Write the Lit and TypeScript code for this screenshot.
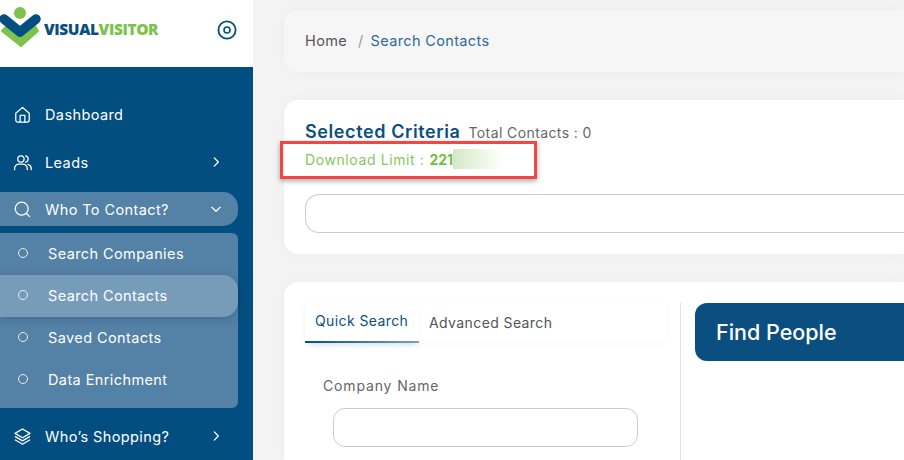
import { LitElement, html, css, svg } from "lit";
import { customElement } from "lit/decorators.js";

const stroke = (d: unknown, size = 20, w = 1.6) => html`<svg width=${size} height=${size} viewBox="0 0 24 24" fill="none" stroke="currentColor" stroke-width=${w} stroke-linecap="round" stroke-linejoin="round">${d}</svg>`;
const home = svg`<path d="M3.5 10.5 12 3l8.5 7.5V19a2.5 2.5 0 0 1-2.5 2.5H6A2.5 2.5 0 0 1 3.5 19z"/><path d="M9 21.5V13h6v8.5"/>`;
const users = svg`<circle cx="10" cy="7.5" r="4"/><path d="M2 21v-1.5A5.5 5.5 0 0 1 7.5 14h5a5.5 5.5 0 0 1 5.5 5.5V21"/><path d="M16 3.6a4 4 0 0 1 0 7.8"/><path d="M19 14.3a5.5 5.5 0 0 1 4 5.2V21"/>`;
const search = svg`<circle cx="11" cy="11" r="8.2"/><path d="m21 21-4-4"/>`;
const layers = svg`<path d="M12 2.5 2.5 8 12 13.5 21.5 8z"/><path d="m3 12.2 9 5.3 9-5.3"/><path d="m3 16.4 9 5.3 9-5.3"/>`;
const right = svg`<path d="m9 5 7 7-7 7"/>`;
const down = svg`<path d="m5 9 7 7 7-7"/>`;

@customElement("app-root")
export class AppRoot extends LitElement {
  static styles = css`
    :host { display: block; width: 904px; height: 460px; overflow: hidden; background: #f3f3f3; font-family: Inter, "Open Sans", sans-serif; position: relative; }
    .page { display: flex; height: 460px; }
    .side { width: 253px; flex: none; background: #034e80; color: #fff; font-size: 14.5px; letter-spacing: .4px; }
    .brand { height: 67px; background: #fff; display: flex; align-items: flex-start; box-sizing: border-box; padding-top: 6px; }
    .wordmark { font: 800 15.5px/1 "Open Sans", sans-serif; letter-spacing: -.42px; color: #0b4f80; margin: 16px 0 0 2px; }
    .wordmark span { color: #7cc24c; }
    .target { margin: 14px 16px 0 auto; color: #034e80; display: flex; }
    .menu { padding-top: 23px; }
    .item { height: 48px; display: flex; align-items: center; padding-left: 13px; width: 238px; box-sizing: border-box; }
    .item svg:first-child { flex: none; }
    .item .label { margin-left: 13px; flex: 1; }
    .item .chev { margin-right: 15px; display: flex; }
    .item.open { height: 34px; margin-top: 6px; background: #5481a6; border-radius: 0 15px 15px 0; }
    .sub { margin-top: 7px; width: 238px; height: 175px; background: #5481a6; border-radius: 0 6px 6px 0; display: flex; flex-direction: column; }
    .subitem { height: 42px; box-sizing: border-box; padding-bottom: 2px; display: flex; align-items: center; padding-left: 18px; gap: 20px; }
    .subitem.active { background: #779cb9; border-radius: 0 15px 15px 0; box-shadow: 0 2px 8px rgba(0,40,70,.25); }
    .dot { width: 8px; height: 8px; border: 1px solid #e6edf3; border-radius: 50%; flex: none; }
    .item.last { margin-top: 4px; }
    .main { flex: 1; min-width: 0; padding: 10px 0 0 31px; display: flex; flex-direction: column; gap: 28px; }
    .card { background: #fff; border-radius: 14px 0 0 14px; box-shadow: 0 0 12px rgba(0,0,0,.03); }
    .crumbs { height: 62px; background: #f6f6f6; display: flex; align-items: center; padding: 0 0 2px 21px; font-size: 14.5px; letter-spacing: .35px; color: #555; box-sizing: border-box; }
    .crumbs .sep { color: #999; margin: 0 7px 0 11px; }
    .crumbs .cur { color: #2f6a96; }
    .criteria { height: 154px; box-sizing: border-box; padding: 21px 0 0 21px; position: relative; }
    .title { display: flex; align-items: baseline; gap: 8px; }
    .title h2 { margin: 0; font-size: 18px; font-weight: 600; color: #0b4f80; letter-spacing: .6px; }
    .title span { font-size: 14px; color: #666; letter-spacing: .4px; }
    .limit { margin-top: 8px; font-size: 14px; letter-spacing: .6px; color: #85c75c; display: flex; align-items: center; height: 18px; }
    .limit b { color: #73bf45; margin-left: 5px; letter-spacing: 0; }
    .smear { width: 50px; height: 20px; background: linear-gradient(90deg, #d3e9c4, #fff); }
    .field { margin-top: 25px; height: 39px; border: 1px solid #ccc; border-radius: 14px 0 0 14px; border-right: none; box-sizing: border-box; position: relative; top: 1px; }
    .mark { position: absolute; left: -4px; top: 41px; width: 257px; height: 38px; box-sizing: border-box; border: 3px solid #f44545; box-shadow: 0 2px 5px rgba(0,0,0,.35); }
    .search { flex: 1; display: flex; padding: 21px 0 0 21px; border-radius: 14px 0 0 0; }
    .left { width: 361px; flex: none; }
    .tabs { display: flex; background: #fff; height: 38px; box-shadow: 0 2px 10px rgba(0,0,0,.03); }
    .tab { font-size: 14px; color: #555; padding: 0 10px; display: flex; align-items: center; letter-spacing: .4px; }
    .tab.on { color: #0b4f80; width: 114px; box-sizing: border-box; padding-bottom: 3px; height: 40px; border-bottom: 2px solid; border-image: linear-gradient(90deg, #034e80, #7ea3c0) 1; box-shadow: 0 4px 6px -3px rgba(3,78,128,.2); }
    .lbl { font-size: 14px; color: #666; margin: 36px 0 0 18px; letter-spacing: .85px; }
    .input { margin: 14px 0 0 28px; width: 305px; height: 39px; box-sizing: border-box; border: 1px solid #ccc; border-radius: 12px; }
    .vline { width: 1px; background: #e3e3e3; margin-left: 14px; flex: none; }
    .find { flex: 1; margin-left: 14px; height: 58px; background: #0b4f80; color: #fff; border-radius: 12px 0 0 12px; font-size: 21.5px; font-weight: 500; display: flex; align-items: center; padding-left: 21px; padding-bottom: 1px; box-sizing: border-box; }
  `;

  render() {
    return html`<div class="page">
      <aside class="side">
        <div class="brand">
          <svg width="42" height="42" viewBox="0 0 42 42" style="flex:none">
            <path d="M2 25 21 40 38 25 35 20 21 31 7 20z" fill="#7cc24c" stroke="#7cc24c" stroke-width="2" stroke-linejoin="round"/>
            <circle cx="20" cy="7" r="6" fill="#7cc24c"/>
            <path d="M4 13 20 26 36 13" fill="none" stroke="#034e80" stroke-width="9.5" stroke-linecap="round" stroke-linejoin="round"/>
          </svg>
          <div class="wordmark">VISUAL<span>VISITOR</span></div>
          <div class="target"><svg width="20" height="20" viewBox="0 0 20 20" fill="none" stroke="currentColor"><circle cx="10" cy="10" r="8.6" stroke-width="1.8"/><circle cx="10" cy="10" r="3" stroke-width="1.6"/></svg></div>
        </div>
        <nav class="menu">
          <div class="item">${stroke(home, 19)}<span class="label">Dashboard</span></div>
          <div class="item">${stroke(users, 19)}<span class="label">Leads</span><span class="chev">${stroke(right, 14, 2.2)}</span></div>
          <div class="item open">${stroke(search, 19)}<span class="label">Who To Contact?</span><span class="chev">${stroke(down, 14, 2.2)}</span></div>
          <div class="sub">
            <div class="subitem"><span class="dot"></span>Search Companies</div>
            <div class="subitem active"><span class="dot"></span>Search Contacts</div>
            <div class="subitem"><span class="dot"></span>Saved Contacts</div>
            <div class="subitem"><span class="dot"></span>Data Enrichment</div>
          </div>
          <div class="item last">${stroke(layers, 19)}<span class="label">Who’s Shopping?</span><span class="chev">${stroke(right, 14, 2.2)}</span></div>
        </nav>
      </aside>
      <main class="main">
        <div class="card crumbs">Home<span class="sep">/</span><span class="cur">Search Contacts</span></div>
        <section class="card criteria">
          <div class="title"><h2>Selected Criteria</h2><span>Total Contacts : 0</span></div>
          <div class="limit">Download Limit : <b>221</b><span class="smear"></span></div>
          <div class="field"></div>
          <div class="mark"></div>
        </section>
        <section class="card search">
          <div class="left">
            <div class="tabs"><div class="tab on">Quick Search</div><div class="tab">Advanced Search</div></div>
            <div class="lbl">Company Name</div>
            <div class="input"></div>
          </div>
          <div class="vline"></div>
          <div class="find">Find People</div>
        </section>
      </main>
    </div>`;
  }
}
